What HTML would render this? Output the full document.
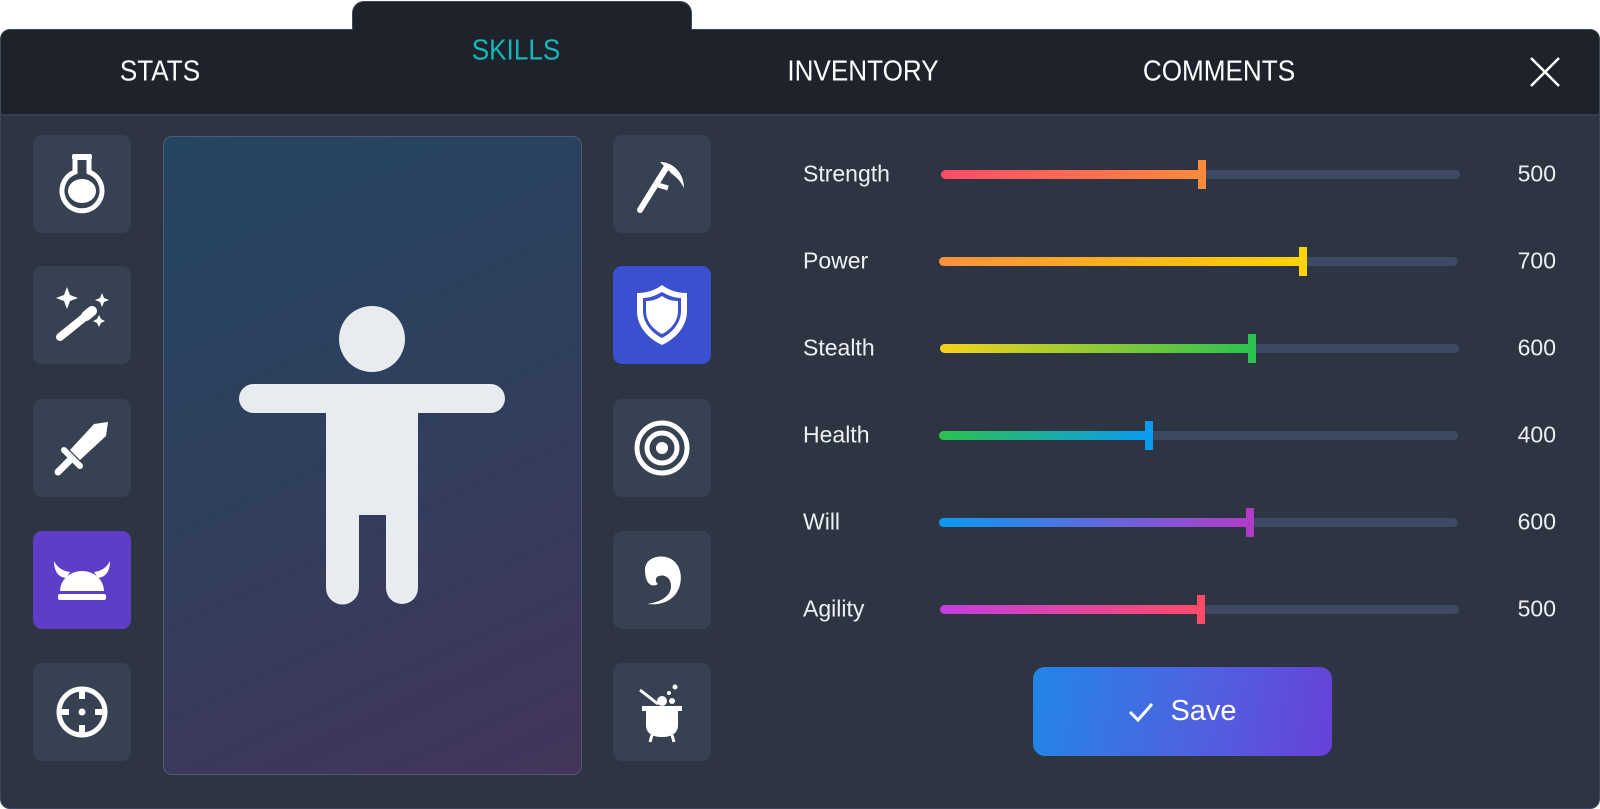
<!DOCTYPE html>
<html><head><meta charset="utf-8"><style>
*{margin:0;padding:0;box-sizing:border-box}
body{width:1600px;height:809px;background:#fff;position:relative;overflow:hidden;font-family:"Liberation Sans",sans-serif}
.abs{position:absolute}
.panel{left:0;top:29px;width:1600px;height:780px;background:#2d3542;border:1px solid #3d4858;border-radius:10px;overflow:hidden}
.head{left:0;top:0;width:1598px;height:86px;background:#1e232b;border-bottom:2px solid #343e4c}
.tab{left:352px;top:1px;width:340px;height:60px;background:#1e232b;border:1px solid #3d4858;border-bottom:none;border-radius:12px 12px 0 0}
.tt{position:absolute;font-size:29px;color:#fff;transform:translate(-50%,-50%) scaleX(0.9);white-space:nowrap}
.btn{position:absolute;width:98px;height:98px;background:#364152;border-radius:9px;display:flex;align-items:center;justify-content:center}
.lbl{position:absolute;left:803px;font-size:23px;color:#eef0f3;transform:translateY(-50%)}
.val{position:absolute;right:44px;font-size:23px;color:#eef0f3;transform:translateY(-50%)}
.track{position:absolute;left:941px;width:519px;height:9px;border-radius:5px;background:#3e4a63}
.fill{position:absolute;left:0;top:0;height:9px;border-radius:5px 0 0 5px}
.hd{position:absolute;top:-10px;width:8px;height:29px}
</style></head><body>
<div class="abs tab"></div>
<div class="abs panel">
 <div class="abs head"></div>
</div>
<div class="abs" style="left:353px;top:20px;width:338px;height:14px;background:#1e232b"></div>
<div class="tt" style="left:160px;top:72px">STATS</div>
<div class="tt" style="left:516px;top:51px;color:#14b8b8">SKILLS</div>
<div class="tt" style="left:863px;top:72px">INVENTORY</div>
<div class="tt" style="left:1219px;top:72px">COMMENTS</div>
<svg class="abs" style="left:1530px;top:57px" width="30" height="30" viewBox="0 0 30 30"><path d="M1 1L29 29M29 1L1 29" stroke="#fff" stroke-width="2.5"/></svg>

<div class="btn" style="left:33px;top:135px"><svg width="56" height="64" viewBox="0 0 56 64"><rect x="18" y="2" width="20" height="6" rx="2" fill="#fff"/><path d="M21 8v12A20 20 0 1 0 35 20V8" fill="none" stroke="#fff" stroke-width="5"/><ellipse cx="28" cy="39" rx="14" ry="12" fill="#fff"/></svg></div>
<div class="btn" style="left:33px;top:266px"><svg width="64" height="64" viewBox="0 0 64 64"><path d="M17 4l3 8 8 3-8 3-3 8-3-8-8-3 8-3z" fill="#fff"/><path d="M52 10l2 5 5 2-5 2-2 5-2-5-5-2 5-2z M49 32l2 4 4 2-4 2-2 4-2-4-4-2 4-2z" fill="#fff"/><path d="M10 54L36 33" stroke="#fff" stroke-width="8" stroke-linecap="round"/><path d="M36 33l6-5" stroke="#fff" stroke-width="10" stroke-linecap="round"/></svg></div>
<div class="btn" style="left:33px;top:399px"><svg width="64" height="64" viewBox="0 0 64 64"><path d="M58 6l-2 14-26 24-10-10 24-26z" fill="#fff"/><path d="M14 34l16 16" stroke="#fff" stroke-width="6" stroke-linecap="round"/><path d="M21 43L8 56" stroke="#fff" stroke-width="7" stroke-linecap="round"/></svg></div>
<div class="btn" style="left:33px;top:531px;background:#5e3ec6"><svg width="64" height="50" viewBox="0 0 64 50"><path d="M4 6c0 10 4 16 12 17l4-6C12 16 7 12 4 6zM60 6c0 10-4 16-12 17l-4-6c8-1 13-5 16-11z" fill="#fff"/><path d="M10 36a22 20 0 0 1 44 0z" fill="#fff"/><rect x="8" y="39" width="48" height="6" rx="2" fill="#fff"/></svg></div>
<div class="btn" style="left:33px;top:663px"><svg width="56" height="56" viewBox="0 0 56 56"><circle cx="28" cy="28" r="23" fill="none" stroke="#fff" stroke-width="5"/><path d="M28 3v12M28 41v12M3 28h12M41 28h12" stroke="#fff" stroke-width="6"/><circle cx="28" cy="28" r="3.5" fill="#fff"/></svg></div>

<div class="abs" style="left:163px;top:136px;width:419px;height:639px;border-radius:9px;border:1px solid #4d5a72;background:linear-gradient(155deg,#244560 0%,#2f3f5e 45%,#433559 100%)"></div>
<svg class="abs" style="left:163px;top:136px" width="419" height="639" viewBox="0 0 419 639"><circle cx="209" cy="203" r="33" fill="#e8ebf0"/><rect x="76" y="248" width="266" height="29" rx="14.5" fill="#e8ebf0"/><path d="M163 262h92v190a16 16 0 0 1-32 0V379h-27v73a16 16 0 0 1-33 0z" fill="#e8ebf0"/></svg>

<div class="btn" style="left:613px;top:135px"><svg width="64" height="64" viewBox="0 0 64 64"><path d="M10 58L36 16" stroke="#fff" stroke-width="6" stroke-linecap="round"/><path d="M30 10c14 0 24 12 24 26-2-4-6-10-12-14z" fill="#fff"/><path d="M28 33l10 3" stroke="#fff" stroke-width="5"/></svg></div>
<div class="btn" style="left:613px;top:266px;background:#3a50cf"><svg width="56" height="64" viewBox="0 0 56 64"><path d="M28 2C20 8 12 10 3 10v18c0 16 12 28 25 34 13-6 25-18 25-34V10c-9 0-17-2-25-8z" fill="#fff"/><path d="M28 9C21 13 15 15 9 15v13c0 12 9 22 19 27 10-5 19-15 19-27V15c-6 0-12-2-19-6z" fill="#3a50cf"/><path d="M28 13C22 17 17 18 12 18v10c0 11 8 19 16 23 8-4 16-12 16-23V18c-5 0-10-1-16-5z" fill="#fff"/></svg></div>
<div class="btn" style="left:613px;top:399px"><svg width="60" height="60" viewBox="0 0 60 60"><circle cx="30" cy="30" r="25" fill="none" stroke="#fff" stroke-width="5"/><circle cx="30" cy="30" r="15" fill="none" stroke="#fff" stroke-width="5"/><circle cx="30" cy="30" r="6" fill="#fff"/></svg></div>
<div class="btn" style="left:613px;top:531px"><svg width="50" height="56" viewBox="0 0 50 56"><path d="M8 18C8 6 22 2 32 6c12 5 14 20 10 30-4 10-14 18-32 16 14-2 24-8 24-18 0-8-6-12-12-10-4 1-4 6-1 8-6 4-13 0-13-14z" fill="#fff"/></svg></div>
<div class="btn" style="left:613px;top:663px"><svg width="60" height="64" viewBox="0 0 60 64"><path d="M8 10l18 14" stroke="#fff" stroke-width="3"/><circle cx="30" cy="21" r="5" fill="#fff"/><circle cx="40" cy="21" r="3" fill="#fff"/><circle cx="37" cy="13" r="2" fill="#fff"/><circle cx="43" cy="7" r="2.5" fill="#fff"/><rect x="10" y="26" width="40" height="5" fill="#fff"/><path d="M14 31h32v14c0 8-6 12-16 12s-16-4-16-12z" fill="#fff"/><path d="M20 55l-2 7M40 55l2 7" stroke="#fff" stroke-width="3"/></svg></div>

<div class="lbl" style="top:174px">Strength</div><div class="val" style="top:174px">500</div>
<div class="track" style="top:170px"><div class="fill" style="width:261px;background:linear-gradient(90deg,#ff4b69,#ff8a3b)"></div><div class="hd" style="left:257px;background:#ff8a3b"></div></div>
<div class="lbl" style="top:261px">Power</div><div class="val" style="top:261px">700</div>
<div class="track" style="top:257px;left:939px"><div class="fill" style="width:364px;background:linear-gradient(90deg,#ff8f3d,#ffd400)"></div><div class="hd" style="left:360px;background:#ffd400"></div></div>
<div class="lbl" style="top:348px">Stealth</div><div class="val" style="top:348px">600</div>
<div class="track" style="top:344px;left:940px"><div class="fill" style="width:312px;background:linear-gradient(90deg,#f5d31a,#2bc24f)"></div><div class="hd" style="left:308px;background:#2bc24f"></div></div>
<div class="lbl" style="top:435px">Health</div><div class="val" style="top:435px">400</div>
<div class="track" style="top:431px;left:939px"><div class="fill" style="width:210px;background:linear-gradient(90deg,#2bc24f,#0a9bf0)"></div><div class="hd" style="left:206px;background:#0a9bf0"></div></div>
<div class="lbl" style="top:522px">Will</div><div class="val" style="top:522px">600</div>
<div class="track" style="top:518px;left:939px"><div class="fill" style="width:311px;background:linear-gradient(90deg,#0a9bf0,#b03cc8)"></div><div class="hd" style="left:307px;background:#b03cc8"></div></div>
<div class="lbl" style="top:609px">Agility</div><div class="val" style="top:609px">500</div>
<div class="track" style="top:605px;left:940px"><div class="fill" style="width:261px;background:linear-gradient(90deg,#c23ee0,#ff4b69)"></div><div class="hd" style="left:257px;background:#ff4b69"></div></div>

<div class="abs" style="left:1033px;top:667px;width:299px;height:89px;border-radius:12px;background:linear-gradient(100deg,#2286e6,#4f62e0 55%,#6741d9);display:flex;align-items:center;justify-content:center;color:#fff;font-size:29px">
<svg width="26" height="22" viewBox="0 0 26 22" style="margin-right:16px"><path d="M2 11l8 8L24 3" fill="none" stroke="#fff" stroke-width="3"/></svg>Save</div>
</body></html>
